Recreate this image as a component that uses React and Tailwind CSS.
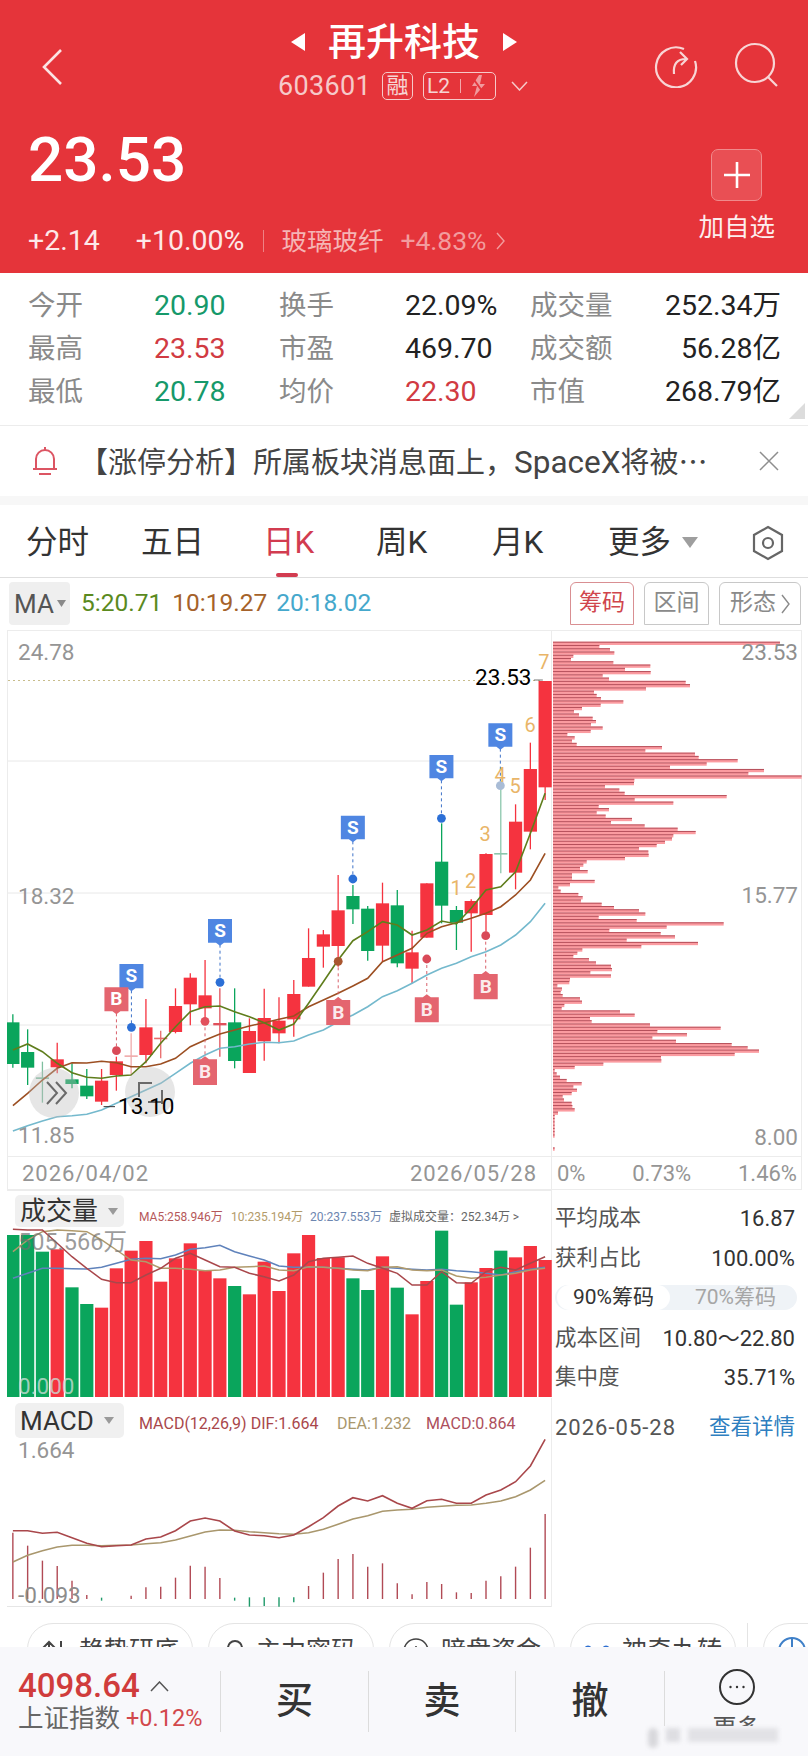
import React from "react";

const cx = (i) => (36 + 41.4 * i) / 2.8;
const X = (z) => z / 2.8;
const Y = (z) => 900 + z / 3;
const G = "#0aa55c";
const R = "#f5333f";

const candles = [
  [0, G, 367, 492, 343, 503], [1, G, 456, 503, 388, 555], [2, "#7fbf9f", 532, 534, 485, 608], [3, R, 478, 502, 428, 520],
  [4, G, 538, 552, 490, 565], [5, G, 557, 589, 507, 597], [6, R, 542, 605, 507, 615], [7, R, 484, 525, 470, 572],
  [8, "#efaaaa", 466, 468, 400, 525], [9, R, 382, 465, 297, 490], [10, "#e86a6a", 413, 417, 392, 475], [11, R, 318, 396, 265, 400],
  [12, R, 233, 313, 220, 376], [13, R, 286, 325, 180, 375], [14, "#e0505a", 369, 376, 265, 470], [15, G, 367, 483, 265, 505],
  [16, R, 393, 519, 355, 519], [17, R, 354, 424, 266, 482], [18, R, 362, 400, 292, 430], [19, R, 282, 358, 240, 410],
  [20, R, 174, 260, 85, 260], [21, R, 103, 140, 90, 203], [22, R, 31, 138, -75, 200], [23, G, -12, 28, -45, 72],
  [24, G, 26, 153, 18, 182], [25, R, 10, 137, -52, 185], [26, G, 16, 190, -30, 202], [27, R, 157, 206, 92, 250],
  [28, R, -50, 113, -50, 113], [29, G, -115, 17, -230, 70], [30, G, 30, 68, 18, 150], [31, R, 3, 40, -2, 155],
  [32, R, -138, 45, -140, 95], [33, "#8cc7ac", -141, -139, -343, -80], [34, R, -235, -82, -287, -32], [35, R, -393, -205, -472, -152],
  [36, R, -657, -338, -657, -300],
];

const ma5 = [450,432,455,490,518,532,535,528,525,485,430,380,335,320,318,335,350,368,390,372,310,245,180,122,95,65,75,105,90,63,72,25,-30,-40,-85,-200,-320];
const ma10 = [617,580,540,505,488,489,484,488,500,500,492,475,440,420,402,390,378,368,358,348,320,300,280,258,235,185,165,145,100,80,68,55,40,20,-15,-60,-140];
const ma20 = [693,677,663,650,647,643,630,610,590,570,550,520,490,465,445,440,432,427,428,423,405,390,365,345,320,290,272,250,225,205,190,170,155,135,105,65,10];

const pts = (arr, fy) => arr.map((v, i) => `${cx(i).toFixed(1)},${fy(v).toFixed(1)}`).join(" ");

const sMarks = [
  [368, 192, 265, 382], [616, 57, 128, 247], [988, -253, -182, -63], [1236, -435, -365, -245], [1401, -530, -460, -343],
];
const bMarks = [
  [574, 478, 555, 364, "#e2505c"], [947, 300, 375, 184, "#a9562f"], [1195, 292, 367, 177, "#d94a58"], [1360, 222, 298, 107, "#d94a58"],
];
const digits = [
  ["1", 1277, -35], ["2", 1318, -58], ["3", 1358, -198], ["4", 1400, -375], ["5", 1442, -342], ["6", 1484, -525], ["7", 1523, -713],
];

function MainChart() {
  return (
    <svg width="545" height="526" viewBox="7 630 545 526" className="block">
      <line x1="7" y1="630.5" x2="552" y2="630.5" stroke="#ececec" />
      <line x1="7.5" y1="630" x2="7.5" y2="1156" stroke="#ececec" />
      <line x1="551.5" y1="630" x2="551.5" y2="1156" stroke="#ececec" />
      {[761, 893, 1025].map((y) => (
        <line key={y} x1="8" y1={y} x2="551" y2={y} stroke="#e8e8e8" />
      ))}
      <line x1="8" y1="680.5" x2="540" y2="680.5" stroke="#c8bd8c" strokeDasharray="2 3" />
      {candles.map(([i, c, t, b, h, l]) => (
        <g key={i}>
          <line x1={cx(i)} x2={cx(i)} y1={Y(h)} y2={Y(l)} stroke={c} strokeWidth="1.3" />
          <rect x={cx(i) - 6.6} y={Y(t)} width="13.2" height={Math.max(1.6, (b - t) / 3)} fill={c} />
        </g>
      ))}
      <polyline points={pts(ma20, Y)} fill="none" stroke="#74b9cd" strokeWidth="1.6" />
      <polyline points={pts(ma10, Y)} fill="none" stroke="#9c4f22" strokeWidth="1.6" />
      <polyline points={pts(ma5, Y)} fill="none" stroke="#5f7d1c" strokeWidth="1.6" />

      {sMarks.map(([x, t, b, d], i) => (
        <g key={i}>
          <line x1={X(x)} x2={X(x)} y1={Y(b) + 2} y2={Y(d)} stroke="#3f73c8" strokeDasharray="3 3" />
          <circle cx={X(x)} cy={Y(d)} r="4.4" fill={i === 4 ? "#a9bcd6" : "#2c6fd6"} />
          <path d={`M${X(x) - 12} ${Y(t)}h24v${(b - t) / 3}h-8l-4 3l-4 -3h-8z`} fill="#4f86e2" />
          <text x={X(x)} y={Y(t) + 18} textAnchor="middle" fontSize="19" fontWeight="700" fill="#fff" fontFamily="Roboto, sans-serif">S</text>
        </g>
      ))}
      {bMarks.map(([x, t, b, d, c], i) => (
        <g key={i}>
          <line x1={X(x)} x2={X(x)} y1={Y(d)} y2={Y(t)} stroke="#d9606a" strokeDasharray="3 3" />
          <circle cx={X(x)} cy={Y(d)} r="4.4" fill={c} />
          <path d={`M${X(x) - 12} ${Y(t)}h8l4 -3l4 3h8v${(b - t) / 3}h-24z`} fill="#e4656f" />
          <text x={X(x)} y={Y(t) + 19} textAnchor="middle" fontSize="19" fontWeight="700" fill="#fff" fillOpacity=".88" fontFamily="Roboto, sans-serif">B</text>
        </g>
      ))}
      <g>
        <line x1={X(326)} x2={X(326)} y1={Y(340)} y2={Y(452)} stroke="#d9606a" strokeDasharray="3 3" />
        <circle cx={X(326)} cy={Y(452)} r="4.4" fill="#d94a58" />
        <path d={`M${X(326) - 12} ${Y(262)}h24v24h-8l-4 3l-4 -3h-8z`} fill="#e4656f" />
        <text x={X(326)} y={Y(262) + 18} textAnchor="middle" fontSize="19" fontWeight="700" fill="#fff" fontFamily="Roboto, sans-serif">B</text>
      </g>
      {digits.map(([d, x, z]) => (
        <text key={d} x={X(x)} y={Y(z) + 7} textAnchor="middle" fontSize="20" fill="#e9b568" fontFamily="Roboto, sans-serif">{d}</text>
      ))}
      <line x1={X(1495)} x2={X(1520)} y1="680" y2="680" stroke="#777" />
      <line x1={X(290)} x2={X(322)} y1={Y(620)} y2={Y(620)} stroke="#333" />

      <circle cx="54" cy="1093" r="25" fill="#bdbdbd" fillOpacity=".38" />
      <circle cx="150" cy="1092" r="25" fill="#bdbdbd" fillOpacity=".38" />
      <path d="M47 1082l10 11l-10 11M56 1082l10 11l-10 11" fill="none" stroke="#6a6a6a" strokeWidth="2" />
      <path d="M139 1097v-14h13M162 1090v14M148 1102h14" fill="none" stroke="#6a6a6a" strokeWidth="2" />
    </svg>
  );
}

const rows = [720,178,210,223,100,93,220,331,255,332,188,207,437,450,318,162,170,183,250,182,126,102,117,158,168,153,188,152,82,104,96,110,366,316,465,476,593,500,390,672,625,785,283,282,195,238,254,560,284,400,176,207,170,197,276,213,314,413,467,400,396,375,350,297,325,326,255,140,130,120,143,96,96,164,90,55,62,115,128,123,185,222,297,316,176,290,551,380,208,362,405,260,474,304,127,112,100,147,168,213,216,151,213,90,88,52,66,62,68,120,126,73,65,240,284,150,155,330,542,352,441,337,408,575,623,657,584,363,364,190,104,44,50,60,80,125,100,111,95,68,72,95,97,104,54,44,44,44,44,44,44,44,0,0,0,44];

function Distribution() {
  return (
    <svg width="250" height="526" viewBox="552 630 250 526" className="block">
      <line x1="552" y1="630.5" x2="802" y2="630.5" stroke="#ececec" />
      <line x1="801.5" y1="630" x2="801.5" y2="1156" stroke="#ececec" />
      {rows.map((w, i) => {
        if (!w) return null;
        const y = 641.7 + i * 3.263;
        const wide = 540 + w / 3 - 553;
        return (
          <g key={i}>
            <rect x="553" y={y} width={wide} height="3.26" fill="#fb9ba0" />
            <rect x="553" y={y} width={wide} height="1" fill="#b6505b" />
          </g>
        );
      })}
    </svg>
  );
}

const vols = [[G,165],[G,165],[G,215],[R,208],[G,322],[G,372],[R,383],[R,265],[R,212],[R,183],[R,305],[R,235],[R,190],[R,272],[R,295],[G,318],[R,343],[R,245],[R,333],[R,220],[R,165],[R,234],[R,232],[G,295],[G,330],[R,229],[G,323],[R,403],[R,303],[G,152],[G,374],[R,307],[R,264],[G,212],[R,232],[R,198],[R,240]];
const v5 = [148,150,150,190,230,265,298,308,308,285,265,235,220,240,260,262,280,290,303,285,245,235,232,228,250,265,280,315,315,275,308,310,275,262,270,250,230];
const v10 = [215,180,155,150,152,155,180,210,240,245,265,265,268,272,270,262,260,258,270,272,260,262,265,270,272,262,260,270,272,270,288,295,292,285,280,270,265];
const v20 = [295,280,265,265,266,267,262,250,238,235,236,225,208,203,196,215,228,240,258,262,262,262,265,268,270,262,265,268,270,268,272,275,280,285,275,268,262];
const Yv = (z) => 1180 + z / 3;

function VolumeChart() {
  return (
    <svg width="545" height="207" viewBox="7 1190 545 207" className="block">
      <line x1="7" y1="1190.5" x2="552" y2="1190.5" stroke="#ececec" />
      <line x1="551.5" y1="1190" x2="551.5" y2="1397" stroke="#ececec" />
      {vols.map(([c, t], i) => (
        <rect key={i} x={cx(i) - 6.6} y={Yv(t)} width="13.2" height={(652 - t) / 3} fill={c} />
      ))}
      <polyline points={pts(v20, Yv)} fill="none" stroke="#5f82bb" strokeWidth="1.5" />
      <polyline points={pts(v10, Yv)} fill="none" stroke="#b09a6c" strokeWidth="1.5" />
      <polyline points={pts(v5, Yv)} fill="none" stroke="#a9474b" strokeWidth="1.5" />
    </svg>
  );
}

const dif = [422,422,430,427,443,460,470,467,465,447,441,422,393,384,393,423,435,437,443,435,410,383,348,323,333,317,340,355,332,328,340,340,315,300,275,228,148];
const dea = [516,496,482,471,466,466,467,466,465,461,458,450,438,426,420,421,425,428,431,433,428,418,403,387,377,364,360,358,352,349,346,345,340,333,320,300,271];
const hist = [428,467,512,528,572,615,null,null,617,592,590,563,527,530,564,null,null,null,null,null,588,548,507,492,530,520,580,613,576,582,607,609,572,559,530,473,372];
const greens = [[6,623,632],[15,623,632],[16,622,650],[17,622,648],[18,622,650],[19,622,637]];
const Ym = (z) => 1390 + z / 3;

function MacdChart() {
  return (
    <svg width="545" height="209" viewBox="7 1398 545 209" className="block">
      <line x1="7" y1="1606.5" x2="552" y2="1606.5" stroke="#e6e6e6" />
      <line x1="551.5" y1="1398" x2="551.5" y2="1607" stroke="#ececec" />
      {hist.map((t, i) => t !== null && (
        <line key={i} x1={cx(i)} x2={cx(i)} y1={Ym(t)} y2={Ym(627)} stroke="#b14a55" strokeWidth="1.4" />
      ))}
      {greens.map(([i, t, b]) => (
        <line key={i} x1={cx(i)} x2={cx(i)} y1={Ym(t)} y2={Ym(b)} stroke="#1f9a6a" strokeWidth="1.4" />
      ))}
      <polyline points={pts(dea, Ym)} fill="none" stroke="#a9976d" strokeWidth="1.6" />
      <polyline points={pts(dif, Ym)} fill="none" stroke="#a9474b" strokeWidth="1.6" />
    </svg>
  );
}

function Stat({ label, value, tone }) {
  return (
    <div className="flex items-center">
      <span className="w-[126px] text-[#8a8a8a] text-[27.5px] leading-[43px]">{label}</span>
      <span className={`w-[125px] ${tone} text-[28.5px] leading-[43px]`}>{value}</span>
    </div>
  );
}

function StatEnd({ label, value }) {
  return (
    <div className="flex items-center justify-between w-[251px]">
      <span className="text-[#8a8a8a] text-[27.5px] leading-[43px]">{label}</span>
      <span className="text-[#222222] text-[28.5px] leading-[43px]">{value}</span>
    </div>
  );
}

function Tab({ children, className }) {
  return <span className={`text-[31.5px] leading-[44px] ${className}`}>{children}</span>;
}

function Pill({ icon, text }) {
  return (
    <div className="w-[166px] h-[60px] shrink-0 rounded-[26px] border border-[#e4e4e4] flex items-start justify-center gap-[12px] pt-[12px]">
      {icon}
      <span className="text-[25px] leading-[30px] text-[#444444] whitespace-nowrap">{text}</span>
    </div>
  );
}

function InfoRow({ label, value, h = "h-[40px]" }) {
  return (
    <div className={`flex items-center justify-between ${h} pr-[13px]`}>
      <span className="text-[21.5px] text-[#555555]">{label}</span>
      <span className="text-[22px] text-[#333333]">{value}</span>
    </div>
  );
}

export default function App() {
  return (
    <div className="w-[808px] h-[1756px] overflow-hidden flex flex-col bg-white relative font-[Roboto,'Noto_Sans_CJK_SC',sans-serif]">
      {/* Header */}
      <header className="h-[273px] bg-[#e5343a] text-white shrink-0">
        <div className="grid grid-cols-[260px_288px_260px] h-[100px]">
          <div className="pl-[40px] pt-[48px]">
            <svg width="24" height="38" viewBox="0 0 24 38" fill="none" stroke="#fbe3e3" strokeWidth="2.6">
              <path d="M21 2L4 19l17 17" />
            </svg>
          </div>
          <div className="flex flex-col items-center pt-[22px]">
            <div className="flex items-center gap-[23px] h-[40px]">
              <svg width="14" height="18" viewBox="0 0 14 18" fill="#ffffff"><path d="M14 0v18L0 9z" /></svg>
              <span className="text-[38px] leading-[40px] font-medium whitespace-nowrap">再升科技</span>
              <svg width="14" height="18" viewBox="0 0 14 18" fill="#ffffff"><path d="M0 0v18l14-9z" /></svg>
            </div>
            <div className="flex items-center mt-[10px] h-[28px] -ml-[2px]">
              <span className="text-[27px] leading-[28px] text-[#f6c9c9] tracking-[0.3px]">603601</span>
              <span className="ml-[11px] w-[31px] h-[28px] border border-[#f6c9c9] rounded-[5px] flex items-center justify-center text-[22px] text-[#f6d4d4] leading-none">融</span>
              <span className="ml-[10px] w-[73px] h-[28px] border border-[#f6c9c9] rounded-[5px] flex items-center pl-[3px] text-[#f6d4d4] text-[21px] leading-none">
                L2
                <span className="ml-[10px] w-px h-[14px] bg-[#f3a9ab]" />
                <svg className="ml-[10px]" width="15" height="22" viewBox="0 0 15 22" fill="#f19a9d">
                  <path d="M8 0L1 11h5L3 22l11-13H9l2-9z" />
                  <path d="M1 2l13 18" stroke="#e5343a" strokeWidth="2" />
                </svg>
              </span>
              <svg className="ml-[15px]" width="17" height="10" viewBox="0 0 17 10" fill="none" stroke="#f6c9c9" strokeWidth="1.5">
                <path d="M1 1l7.5 8L16 1" />
              </svg>
            </div>
          </div>
          <div className="flex items-start pl-[106px] pt-[44px] gap-[35px]">
            <svg width="44" height="44" viewBox="0 0 44 44" fill="none" stroke="#f8d5d5" strokeWidth="2.2" className="shrink-0">
              <path d="M30 5A20 20 0 1 0 41 17" />
              <path d="M20 30c-1-10 3-15 12-15M26 8l7 7l-6 6" />
            </svg>
            <svg width="46" height="46" viewBox="0 0 46 46" fill="none" stroke="#f8d5d5" strokeWidth="2.2" className="-mt-[3px] shrink-0">
              <circle cx="22" cy="22" r="19" />
              <path d="M35 36l9 9" />
            </svg>
          </div>
        </div>
        <div className="flex justify-between">
          <div className="pl-[28px]">
            <div className="mt-[34px] h-[52px] text-[62px] leading-[52px] font-medium">23.53</div>
            <div className="mt-[41px] h-[28px] flex items-center text-[28.5px] leading-[28px]">
              <span className="text-[#fde8e8]">+2.14</span>
              <span className="ml-[36px] text-[#fde8e8]">+10.00%</span>
              <span className="ml-[19px] w-px h-[22px] bg-[#ee8285]" />
              <span className="ml-[17px] text-[25.5px] text-[#f5b5b5]">玻璃玻纤</span>
              <span className="ml-[17px] text-[26.5px] text-[#f29c9e]">+4.83%</span>
              <svg className="ml-[9px]" width="9" height="18" viewBox="0 0 9 18" fill="none" stroke="#f29c9e" strokeWidth="1.4"><path d="M1 1l7 8-7 8" /></svg>
            </div>
          </div>
          <div className="pr-[33px] flex flex-col items-center">
            <div className="mt-[49px] w-[51px] h-[52px] rounded-[7px] bg-[#e94f54] border border-[#f08a8c] flex items-center justify-center">
              <svg width="26" height="26" viewBox="0 0 26 26" stroke="#ffffff" strokeWidth="2.6"><path d="M13 0v26M0 13h26" /></svg>
            </div>
            <span className="mt-[13px] text-[25.5px] leading-[26px] text-[#fdeeee] whitespace-nowrap">加自选</span>
          </div>
        </div>
      </header>

      {/* Stats */}
      <section className="h-[152px] shrink-0 pt-[11px] pl-[28px] relative">
        <div className="flex">
          <Stat label="今开" value="20.90" tone="text-[#16996a]" />
          <Stat label="换手" value="22.09%" tone="text-[#222222]" />
          <StatEnd label="成交量" value="252.34万" />
        </div>
        <div className="flex">
          <Stat label="最高" value="23.53" tone="text-[#d13b42]" />
          <Stat label="市盈" value="469.70" tone="text-[#222222]" />
          <StatEnd label="成交额" value="56.28亿" />
        </div>
        <div className="flex">
          <Stat label="最低" value="20.78" tone="text-[#16996a]" />
          <Stat label="均价" value="22.30" tone="text-[#d13b42]" />
          <StatEnd label="市值" value="268.79亿" />
        </div>
        <svg className="absolute left-[789px] top-[130px]" width="16" height="16" viewBox="0 0 16 16" fill="#dcdcdc"><path d="M16 0v16H0z" /></svg>
      </section>

      {/* Notice */}
      <section className="h-[71px] shrink-0 border-t border-[#ececec] flex items-center pl-[32px]">
        <svg width="26" height="30" viewBox="0 0 26 30" fill="none" stroke="#dc5563" strokeWidth="2" className="shrink-0">
          <path d="M13 1v3M4 22V13a9 9 0 0 1 18 0v9M1 23h24M7 28h12" />
        </svg>
        <span className="ml-[21px] w-[646px] text-[29px] leading-[40px] text-[#444444] whitespace-nowrap overflow-hidden">
          【涨停分析】所属板块消息面上，<span className="text-[31.5px]">SpaceX</span>将被<span className="font-['Noto_Sans_CJK_SC']">⋯</span>
        </span>
        <svg className="ml-[34px]" width="20" height="20" viewBox="0 0 20 20" stroke="#8e8e8e" strokeWidth="1.5"><path d="M1 1l18 18M19 1L1 19" /></svg>
      </section>
      <div className="h-[9px] shrink-0 bg-[#f7f7f7]" />

      {/* Tabs */}
      <nav className="h-[73px] shrink-0 border-b border-[#dedede] relative flex items-center pl-[26px] pt-[3px]">
        <Tab className="text-[#333333] w-[115px]">分时</Tab>
        <Tab className="text-[#333333] w-[122px]">五日</Tab>
        <Tab className="text-[#d23c50] w-[113px]">日K</Tab>
        <Tab className="text-[#333333] w-[116px]">周K</Tab>
        <Tab className="text-[#333333] w-[116px]">月K</Tab>
        <Tab className="text-[#333333]">更多</Tab>
        <svg className="ml-[11px]" width="16" height="11" viewBox="0 0 16 11" fill="#9e9e9e"><path d="M0 0h16l-8 11z" /></svg>
        <svg className="ml-[54px]" width="32" height="36" viewBox="0 0 32 36" fill="none" stroke="#666666" strokeWidth="2.2">
          <path d="M16 2l14 8v16l-14 8-14-8V10z" />
          <circle cx="16" cy="18" r="5" />
        </svg>
        <span className="absolute left-[276px] top-[68px] w-[22px] h-[4px] rounded-full bg-[#d23c50]" />
      </nav>

      {/* MA row */}
      <section className="h-[52px] shrink-0 flex items-start pt-[4px] pl-[9px]">
        <div className="w-[61px] h-[43px] bg-[#efefef] rounded-[4px] flex items-center pl-[5px]">
          <span className="text-[26px] leading-[30px] text-[#555555]">MA</span>
          <svg className="ml-[3px]" width="9" height="7" viewBox="0 0 9 7" fill="#8a8a8a"><path d="M0 0h9L4.500 7z" /></svg>
        </div>
        <div className="ml-[11px] h-[43px] flex items-center text-[24.5px] whitespace-nowrap">
          <span className="text-[#5b8a1e]">5:20.71</span>
          <span className="ml-[10px] text-[#a5622a]">10:19.27</span>
          <span className="ml-[9px] text-[#45a8cc]">20:18.02</span>
        </div>
        <div className="absolute left-[570px] flex gap-[10px]">
          <span className="w-[64px] h-[43px] border border-[#d98f92] rounded-t-[6px] flex items-center justify-center text-[23px] text-[#d0454c]">筹码</span>
          <span className="w-[65px] h-[43px] border border-[#c8c8c8] rounded-t-[6px] flex items-center justify-center text-[23px] text-[#8a8a8a]">区间</span>
          <span className="w-[82px] h-[43px] border border-[#c8c8c8] rounded-t-[6px] flex items-center justify-center text-[23px] text-[#8a8a8a]">
            形态
            <svg className="ml-[5px]" width="9" height="20" viewBox="0 0 9 20" fill="none" stroke="#8a8a8a" strokeWidth="1.4"><path d="M1 1l7 9-7 9" /></svg>
          </span>
        </div>
      </section>

      {/* Main chart + distribution */}
      <section className="h-[560px] shrink-0 flex pl-[7px]">
        <div className="w-[545px] shrink-0">
          <div className="relative h-[526px]">
            <MainChart />
            <span className="absolute left-[11px] top-[8px] text-[22.500px] leading-[28px] text-[#959595]">24.78</span>
            <span className="absolute left-[11px] top-[252px] text-[22.500px] leading-[28px] text-[#959595]">18.32</span>
            <span className="absolute left-[11px] top-[491px] text-[22.500px] leading-[28px] text-[#959595]">11.85</span>
            <span className="absolute left-[468px] top-[33px] text-[22.500px] leading-[28px] text-black">23.53</span>
            <span className="absolute left-[111px] top-[462px] text-[22.500px] leading-[28px] text-black">13.10</span>
          </div>
          <div className="h-[34px] flex items-center justify-between pl-[14px] pr-[14px] border-t border-b border-[#ececec] border-l border-r">
            <span className="text-[22px] tracking-[1px] text-[#959595]">2026/04/02</span>
            <span className="text-[22px] tracking-[1px] text-[#959595]">2026/05/28</span>
          </div>
        </div>
        <div className="w-[250px] shrink-0">
          <div className="relative h-[526px]">
            <Distribution />
            <span className="absolute right-[4px] top-[8px] text-[22.500px] leading-[28px] text-[#8f8f8f]">23.53</span>
            <span className="absolute right-[4px] top-[251px] text-[22.500px] leading-[28px] text-[#959595]">15.77</span>
            <span className="absolute right-[4px] top-[493px] text-[22.500px] leading-[28px] text-[#959595]">8.00</span>
          </div>
          <div className="h-[34px] flex items-center justify-between pl-[5px] pr-[4px] border-t border-b border-r border-[#ececec]">
            <span className="text-[22px] text-[#959595]">0%</span>
            <span className="text-[22px] text-[#959595]">0.73%</span>
            <span className="text-[22px] text-[#959595]">1.46%</span>
          </div>
        </div>
      </section>

      {/* Volume + MACD + info */}
      <section className="h-[417px] shrink-0 flex pl-[7px]">
        <div className="w-[545px] shrink-0">
          <div className="relative h-[208px]">
            <VolumeChart />
            <div className="absolute left-[8px] top-[5px] w-[109px] h-[32px] bg-[#f0f0f0] rounded-[5px] flex items-center pl-[5px]">
              <span className="text-[26px] leading-[30px] text-[#333333]">成交量</span>
              <svg className="ml-[10px]" width="10" height="7" viewBox="0 0 10 7" fill="#9a9a9a"><path d="M0 0h10L5 7z" /></svg>
            </div>
            <div className="absolute left-[132px] top-[19px] flex text-[12px] leading-[16px] whitespace-nowrap">
              <span className="w-[92px] text-[#b5585a]">MA5:258.946万</span>
              <span className="w-[79px] text-[#b39b6a]">10:235.194万</span>
              <span className="w-[79px] text-[#6d86b0]">20:237.553万</span>
              <span className="text-[#666666]">虚拟成交量：252.34万 &gt;</span>
            </div>
            <span className="absolute left-[11px] top-[38px] text-[23.500px] leading-[28px] text-[#6f6f6f]/70 whitespace-nowrap">505.566万</span>
            <span className="absolute left-[11px] top-[182px] text-[22.500px] leading-[28px] text-[#c8dcd4]/80">0.000</span>
          </div>
          <div className="relative h-[209px]">
            <MacdChart />
            <div className="absolute left-[8px] top-[5px] w-[109px] h-[35px] bg-[#f0f0f0] rounded-[5px] flex items-center pl-[5px]">
              <span className="text-[26px] leading-[30px] text-[#333333]">MACD</span>
              <svg className="ml-[10px]" width="10" height="7" viewBox="0 0 10 7" fill="#9a9a9a"><path d="M0 0h10L5 7z" /></svg>
            </div>
            <div className="absolute left-[132px] top-[16px] flex text-[16px] leading-[20px] whitespace-nowrap">
              <span className="w-[198px] text-[#a9474b]">MACD(12,26,9) DIF:1.664</span>
              <span className="w-[89px] text-[#a9976d]">DEA:1.232</span>
              <span className="text-[#ad4f5c]">MACD:0.864</span>
            </div>
            <span className="absolute left-[11px] top-[38px] text-[22.500px] leading-[28px] text-[#959595]">1.664</span>
            <span className="absolute left-[11px] top-[183px] text-[22.500px] leading-[28px] text-[#8c8c8c]">-0.093</span>
          </div>
        </div>
        <div className="w-[256px] shrink-0 pl-[3px] pt-[8px]">
          <InfoRow label="平均成本" value="16.87" />
          <InfoRow label="获利占比" value="100.00%" />
          <div className="mt-[7px] mr-[11px] h-[25px] rounded-full bg-[#eff3f7] flex items-center relative">
            <span className="ml-[2px] w-[113px] h-[25px] rounded-full bg-white flex items-center justify-center text-[21px] text-[#333333]">90%筹码</span>
            <span className="ml-[9px] w-[113px] text-center text-[21px] text-[#a6a6a6]">70%筹码</span>
          </div>
          <div className="mt-[8px]"><InfoRow label="成本区间" value="10.80～22.80" /></div>
          <InfoRow label="集中度" value="35.71%" h="h-[39px]" />
          <div className="mt-[10px] h-[40px] flex items-center justify-between pr-[13px]">
            <span className="text-[22px] tracking-[1px] text-[#555555]">2026-05-28</span>
            <span className="text-[21.500px] text-[#2f7fc0]">查看详情</span>
          </div>
        </div>
      </section>

      {/* Pills */}
      <section className="h-[40px] shrink-0 overflow-hidden flex gap-[15px] pl-[27px] pt-[16px]">
        <Pill
          text="趋势研底"
          icon={<svg width="26" height="22" viewBox="0 0 26 22" fill="none" stroke="#444444" strokeWidth="2" className="shrink-0 mt-[3px]"><path d="M8 22V3M2 9l6-6 6 6M20 2v18" /></svg>}
        />
        <Pill
          text="主力密码"
          icon={<svg width="18" height="22" viewBox="0 0 18 22" fill="none" stroke="#444444" strokeWidth="2" className="shrink-0 mt-[3px]"><circle cx="9" cy="9" r="7" /></svg>}
        />
        <Pill
          text="暗盘资金"
          icon={<svg width="26" height="26" viewBox="0 0 26 26" fill="none" stroke="#444444" strokeWidth="1.6" className="shrink-0 mt-[2px]"><circle cx="13" cy="13" r="12" /><path d="M8 13h10M13 8v10" /></svg>}
        />
        <Pill
          text="神奇九转"
          icon={<svg width="26" height="22" viewBox="0 0 26 22" fill="#2f6fd0" className="shrink-0 mt-[3px]"><circle cx="4" cy="10" r="3.500" /><circle cx="22" cy="10" r="3.500" /></svg>}
        />
        <span className="w-px h-[24px] bg-[#e4e4e4] shrink-0 -ml-[4px]" />
        <div className="w-[80px] h-[60px] shrink-0 rounded-[26px] border border-[#e4e4e4] pl-[13px] pt-[12px]">
          <svg width="30" height="30" viewBox="0 0 30 30" fill="none" stroke="#3f80c8" strokeWidth="2">
            <circle cx="15" cy="15" r="13" />
            <path d="M15 2v13" />
          </svg>
        </div>
      </section>

      {/* Bottom bar */}
      <footer className="h-[109px] shrink-0 bg-[#f8f8fb] flex items-start pt-[24px] relative">
        <div className="w-[220px] h-[61px] pl-[18px]">
          <div className="flex items-center h-[30px]">
            <span className="text-[33px] leading-[30px] font-medium text-[#d03c3c]">4098.64</span>
            <svg className="ml-[10px]" width="19" height="11" viewBox="0 0 19 11" fill="none" stroke="#555555" strokeWidth="1.5"><path d="M1 10l8.500-9L18 10" /></svg>
          </div>
          <div className="flex items-center h-[31px] mt-[2px] whitespace-nowrap">
            <span className="text-[25.5px] leading-[31px] text-[#666666]">上证指数</span>
            <span className="ml-[6px] text-[23.5px] leading-[31px] text-[#d2484c]">+0.12%</span>
          </div>
        </div>
        <div className="w-[148px] h-[61px] border-l border-[#dcdcdc] flex items-center justify-center text-[37px] font-medium text-[#333333]">买</div>
        <div className="w-[147px] h-[61px] border-l border-[#dcdcdc] flex items-center justify-center text-[37px] font-medium text-[#333333]">卖</div>
        <div className="w-[149px] h-[61px] border-l border-[#dcdcdc] flex items-center justify-center text-[37px] font-medium text-[#333333]">撤</div>
        <div className="w-[144px] h-[61px] border-l border-[#dcdcdc] flex flex-col items-center">
          <svg width="36" height="36" viewBox="0 0 36 36" fill="none" stroke="#333333" strokeWidth="2" className="-mt-[2px] shrink-0">
            <circle cx="18" cy="18" r="17" />
            <circle cx="11.500" cy="18" r="1.200" fill="#333333" stroke="none" />
            <circle cx="18" cy="18" r="1.200" fill="#333333" stroke="none" />
            <circle cx="24.500" cy="18" r="1.200" fill="#333333" stroke="none" />
          </svg>
          <span className="text-[24px] leading-[24px] text-[#555555] mt-[11px] shrink-0 whitespace-nowrap">更多</span>
        </div>
        {/* blurred watermark strip over the corner */}
        <div className="absolute left-[640px] top-[79px] w-[168px] h-[30px] bg-[#f8f8fb]">
          <div className="flex gap-[8px] pl-[8px] pt-[2px] blur-[2px]">
            <span className="w-[10px] h-[20px] bg-[#d8d8dc] rounded-full" />
            <span className="w-[14px] h-[14px] bg-[#dedee2]" />
            <span className="w-[90px] h-[14px] bg-[#e2e2e6]" />
          </div>
        </div>
      </footer>
    </div>
  );
}
